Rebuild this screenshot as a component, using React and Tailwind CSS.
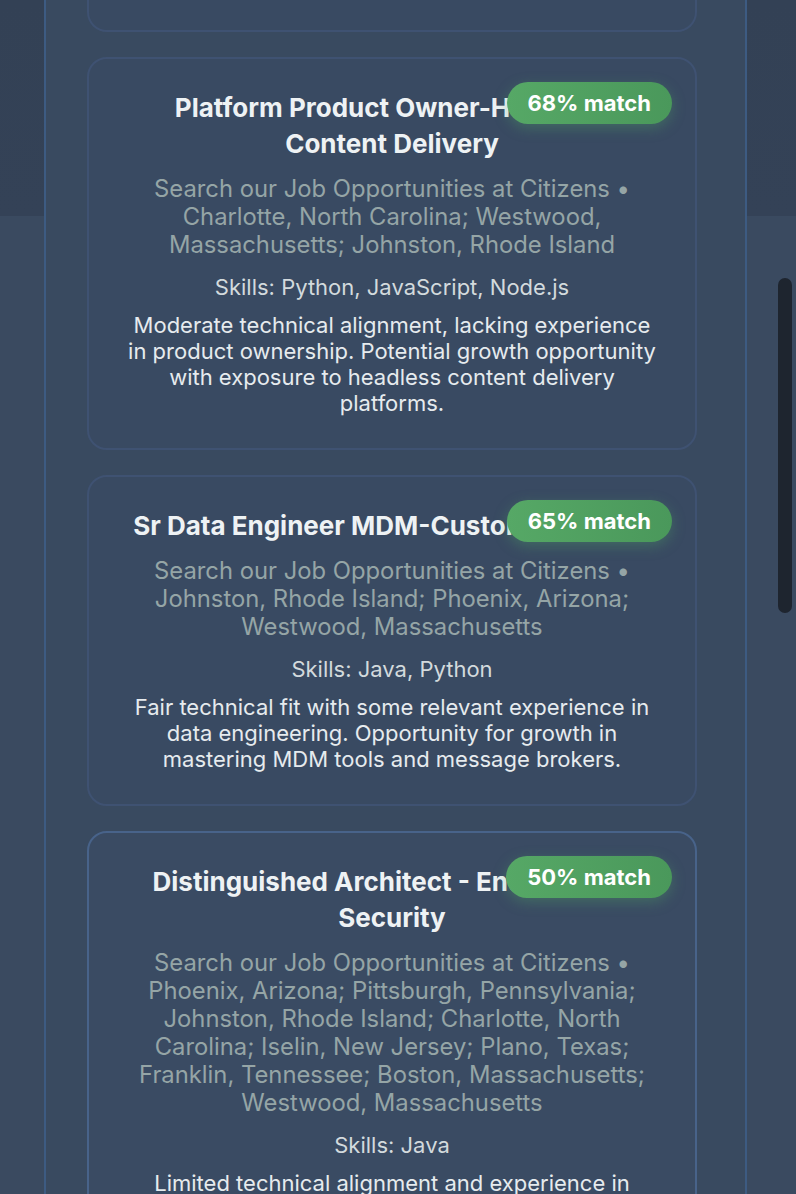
import React from "react";

const jobs = [
  {
    title: "Platform Product Owner-Headless Content Delivery",
    match: "68% match",
    location:
      "Search our Job Opportunities at Citizens • Charlotte, North Carolina; Westwood, Massachusetts; Johnston, Rhode Island",
    skills: "Skills: Python, JavaScript, Node.js",
    desc: "Moderate technical alignment, lacking experience in product ownership. Potential growth opportunity with exposure to headless content delivery platforms.",
  },
  {
    title: "Sr Data Engineer MDM-Customer Master",
    match: "65% match",
    location:
      "Search our Job Opportunities at Citizens • Johnston, Rhode Island; Phoenix, Arizona; Westwood, Massachusetts",
    skills: "Skills: Java, Python",
    desc: "Fair technical fit with some relevant experience in data engineering. Opportunity for growth in mastering MDM tools and message brokers.",
  },
  {
    title: "Distinguished Architect - Enterprise & Security",
    match: "50% match",
    location:
      "Search our Job Opportunities at Citizens • Phoenix, Arizona; Pittsburgh, Pennsylvania; Johnston, Rhode Island; Charlotte, North Carolina; Iselin, New Jersey; Plano, Texas; Franklin, Tennessee; Boston, Massachusetts; Westwood, Massachusetts",
    skills: "Skills: Java",
    desc: "Limited technical alignment and experience in enterprise security architecture. Significant growth required in security frameworks and leadership.",
    active: true,
  },
];

function JobCard({ job }) {
  return (
    <div
      className={`relative rounded-[20px] border-2 px-[36px] pt-[31px] pb-[32px] text-center ${
        job.active
          ? "border-[#48638a] bg-[#3a4b63]"
          : "border-[#3f5272] bg-[#394a62]"
      }`}
    >
      <div className="absolute top-[23px] right-[23px] rounded-full bg-gradient-to-r from-[#56a866] to-[#4a985b] px-[21px] py-[7px] text-[22px] leading-[28px] font-bold text-white shadow-[0_4px_14px_rgba(80,170,100,0.35)]">
        {job.match}
      </div>
      <h3 className="text-[26px] leading-[36px] font-bold text-[#eef2f4]">
        {job.title}
      </h3>
      <p className="mt-[13px] text-[23.8px] leading-[28px] text-[#95a5a6]">
        {job.location}
      </p>
      <p className="mt-[14px] text-[22px] leading-[28px] text-[#d3dadd]">
        {job.skills}
      </p>
      <p className="mt-[11px] text-[22px] leading-[26px] text-[#e6ebee]">
        {job.desc}
      </p>
    </div>
  );
}

export default function App() {
  return (
    <div className="relative h-[1194px] overflow-hidden bg-[linear-gradient(to_bottom,#334155_0px,#344257_216px,#3a4a60_216px,#3a4a60_100%)] font-['Inter','Liberation_Sans',sans-serif]">
      <div className="ml-[44px] h-full w-[703px] border-x-2 border-[#3d5b82] bg-[#394a60] pl-[41px]">
        <div className="flex w-[610px] flex-col gap-[25px]">
          <div className="h-[32px] rounded-b-[20px] border-2 border-t-0 border-[#3f5272] bg-[#394a62]" />
          {jobs.map((j) => (
            <JobCard key={j.title} job={j} />
          ))}
        </div>
      </div>
      <div className="fixed top-[278px] right-[4px] h-[335px] w-[14px] rounded-full bg-[#1e252f]" />
    </div>
  );
}
